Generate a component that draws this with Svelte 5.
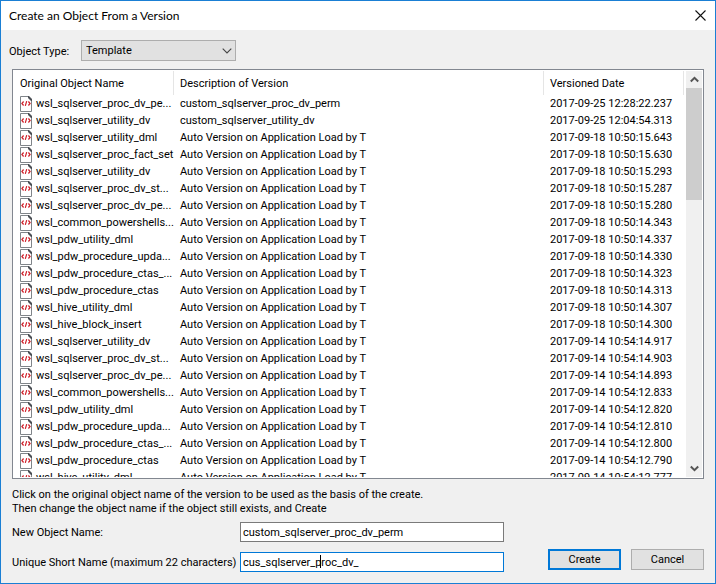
<script>
  const auto = 'Auto Version on Application Load by T';
  const versions = [
    ['wsl_sqlserver_proc_dv_pe...', 'custom_sqlserver_proc_dv_perm', '2017-09-25 12:28:22.237'],
    ['wsl_sqlserver_utility_dv', 'custom_sqlserver_utility_dv', '2017-09-25 12:04:54.313'],
    ['wsl_sqlserver_utility_dml', auto, '2017-09-18 10:50:15.643'],
    ['wsl_sqlserver_proc_fact_set', auto, '2017-09-18 10:50:15.630'],
    ['wsl_sqlserver_utility_dv', auto, '2017-09-18 10:50:15.293'],
    ['wsl_sqlserver_proc_dv_st...', auto, '2017-09-18 10:50:15.287'],
    ['wsl_sqlserver_proc_dv_pe...', auto, '2017-09-18 10:50:15.280'],
    ['wsl_common_powershells...', auto, '2017-09-18 10:50:14.343'],
    ['wsl_pdw_utility_dml', auto, '2017-09-18 10:50:14.337'],
    ['wsl_pdw_procedure_upda...', auto, '2017-09-18 10:50:14.330'],
    ['wsl_pdw_procedure_ctas_...', auto, '2017-09-18 10:50:14.323'],
    ['wsl_pdw_procedure_ctas', auto, '2017-09-18 10:50:14.313'],
    ['wsl_hive_utility_dml', auto, '2017-09-18 10:50:14.307'],
    ['wsl_hive_block_insert', auto, '2017-09-18 10:50:14.300'],
    ['wsl_sqlserver_utility_dv', auto, '2017-09-14 10:54:14.917'],
    ['wsl_sqlserver_proc_dv_st...', auto, '2017-09-14 10:54:14.903'],
    ['wsl_sqlserver_proc_dv_pe...', auto, '2017-09-14 10:54:14.893'],
    ['wsl_common_powershells...', auto, '2017-09-14 10:54:12.833'],
    ['wsl_pdw_utility_dml', auto, '2017-09-14 10:54:12.820'],
    ['wsl_pdw_procedure_upda...', auto, '2017-09-14 10:54:12.810'],
    ['wsl_pdw_procedure_ctas_...', auto, '2017-09-14 10:54:12.800'],
    ['wsl_pdw_procedure_ctas', auto, '2017-09-14 10:54:12.790'],
    ['wsl_hive_utility_dml', auto, '2017-09-14 10:54:12.777']
  ];
  let objectName = $state('custom_sqlserver_proc_dv_perm');
  let shortName = $state('cus_sqlserver_proc_dv_');
</script>

<div class="dialog" role="dialog" aria-labelledby="title">
  <header>
    <h1 id="title">Create an Object From a Version</h1>
    <button class="close" aria-label="Close">
      <svg width="11" height="11" viewBox="0 0 11 11"><path d="M.5.5l10 10M10.5.5l-10 10" stroke="#111" stroke-width="1.1" fill="none" /></svg>
    </button>
  </header>

  <div class="type">
    <label for="type">Object Type:</label>
    <div class="combo">
      <select id="type"><option>Template</option></select>
      <svg width="10" height="6" viewBox="0 0 10 6"><path d="M.7.7L5 5 9.3.7" stroke="#444" stroke-width="1.1" fill="none" /></svg>
    </div>
  </div>

  <div class="list">
    <div class="view">
      <table>
        <colgroup><col class="name" /><col class="desc" /><col class="date" /><col /></colgroup>
        <thead>
          <tr><th>Original Object Name</th><th>Description of Version</th><th>Versioned Date</th><td></td></tr>
        </thead>
        <tbody>
          {#each versions as [name, description, date]}
            <tr>
              <td>
                <div class="item">
                  <svg width="12" height="16" viewBox="0 0 12 16">
                    <path d="M.5.5h8l3 3v12H.5z" fill="#fff" stroke="#7f8489" />
                    <path d="M8 0h1l3 3v2h-1L8 2z" fill="#4a4e54" />
                    <path d="M3.6 5.500L1.900 7.500l1.700 2M8.400 5.500l1.700 2-1.700 2M6.700 5.200L5.300 9.800" fill="none" stroke="#d0202a" stroke-width="1.200" />
                  </svg>
                  <span>{name}</span>
                </div>
              </td>
              <td>{description}</td>
              <td>{date}</td>
              <td></td>
            </tr>
          {/each}
        </tbody>
      </table>
    </div>
    <div class="scroll">
      <button aria-label="Scroll up"><svg width="9" height="7" viewBox="0 0 9 7"><path d="M.8 5.500L4.500 1.800l3.700 3.700" stroke="#555" stroke-width="2" fill="none" /></svg></button>
      <div class="track"><div class="thumb"></div></div>
      <button aria-label="Scroll down"><svg width="9" height="7" viewBox="0 0 9 7"><path d="M.8 1.500l3.700 3.700 3.700-3.700" stroke="#555" stroke-width="2" fill="none" /></svg></button>
    </div>
  </div>

  <p>Click on the original object name of the version to be used as the basis of the create.<br />Then change the object name if the object still exists, and Create</p>

  <form onsubmit={(e) => e.preventDefault()}>
    <div class="fields">
      <label for="object-name">New Object Name:</label>
      <div class="field"><input id="object-name" type="text" bind:value={objectName} /></div>
      <label for="short-name">Unique Short Name (maximum 22 characters)</label>
      <div class="field"><input id="short-name" class="active" type="text" maxlength="22" bind:value={shortName} /><i class="caret"></i></div>
    </div>
    <div class="actions">
      <button class="primary" type="submit">Create</button>
      <button type="button">Cancel</button>
    </div>
  </form>
</div>

<style>
  .dialog {
    box-sizing: border-box;
    display: flex;
    flex-direction: column;
    height: 100vh;
    min-height: 320px;
    border: 1px solid #1a7fd4;
    background: #f0f0f0;
    color: #000;
    font: 11px/14px Roboto, "Liberation Sans", sans-serif;
  }
  button, input, select { box-sizing: border-box; margin: 0; font: inherit; color: inherit; border-radius: 0; }
  header { display: flex; align-items: center; height: 29px; flex: none; padding: 0 9px 0 8px; background: #fff; }
  h1 { flex: 1; margin: 0; font: 12px/16px Lato, "Open Sans", sans-serif; }
  .close { display: flex; padding: 0; border: 0; background: none; }
  .type { display: flex; align-items: center; padding: 10px 8px 8px; }
  .type label { width: 72px; padding-top: 2px; }
  .combo { position: relative; width: 155px; }
  .combo select { display: block; width: 100%; height: 21px; padding: 0 4px; appearance: none; border: 1px solid #adadad; background: #e1e1e1; }
  .combo svg { position: absolute; right: 4px; top: 8px; pointer-events: none; }
  .list { display: flex; flex: 1; min-height: 0; margin: 0 11px; padding: 1px; border: 1px solid #828790; background: #fff; }
  .view { flex: 1; min-width: 0; overflow: hidden; }
  table { width: 100%; table-layout: fixed; border-collapse: separate; border-spacing: 0; }
  .name { width: 160px; }
  .desc { width: 370px; }
  .date { width: 140px; }
  th, td { padding: 1px 0 0 6px; text-align: left; font-weight: normal; white-space: nowrap; }
  th { height: 24px; border-right: 1px solid #e5e5e5; box-sizing: border-box; }
  tbody td { height: 16px; }
  .item { display: flex; align-items: center; gap: 4px; height: 16px; }
  .item svg { flex: none; }
  .scroll { display: flex; flex-direction: column; width: 16px; background: #f0f0f0; }
  .scroll button { display: flex; align-items: center; justify-content: center; height: 17px; padding: 0; border: 0; background: none; }
  .track { flex: 1; }
  .thumb { height: 30%; background: #cdcdcd; }
  p { margin: 9px 11px 6px; }
  form { display: flex; align-items: flex-end; justify-content: space-between; gap: 16px; padding: 0 11px 11px; }
  .fields { display: grid; grid-template-columns: 228px minmax(0, 264px); row-gap: 10px; align-items: center; flex: 1; }
  .fields label { padding-top: 2px; }
  .field { position: relative; }
  input { display: block; width: 100%; height: 20px; padding: 0 2px; border: 1px solid #7a7a7a; background: #fff; }
  .active { border-color: #0078d7; outline: none; }
  .caret { position: absolute; left: 80px; top: 3px; width: 1px; height: 13px; background: #000; }
  .actions { display: flex; gap: 10px; padding-bottom: 2px; }
  .actions button { width: 73px; height: 21px; padding: 0; border: 1px solid #adadad; background: #e1e1e1; }
  .actions .primary { border: 2px solid #0078d7; }
</style>
